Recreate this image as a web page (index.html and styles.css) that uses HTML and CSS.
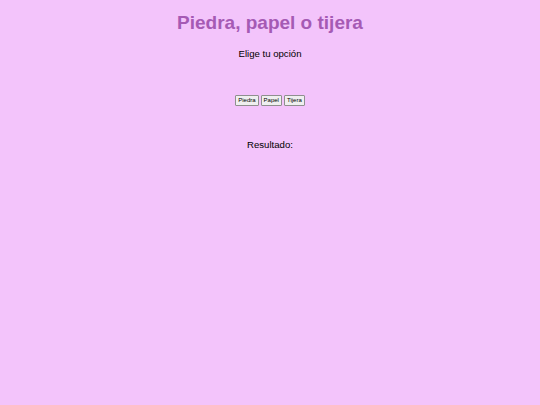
FILE: index.html
```html
<!DOCTYPE html>
<html lang="es">
<head>
	<meta charset="UTF-8">
	<meta name="viewport" content="width=device-width, initial-scale=1.0">
	<title>Piedra, papel o tijera</title>
	<link rel="stylesheet" href="styles.css">
</head>
<body>
	<h1 class="title">Piedra, papel o tijera</h1>
	<p class="prompt">Elige tu opción</p>

	<div class="choices">
		<button class="choice">Piedra</button>
		<button class="choice">Papel</button>
		<button class="choice">Tijera</button>
	</div>

	<p class="result">Resultado: <span class="result-text"></span></p>
</body>
</html>
```

FILE: styles.css
```css
*{padding:0;margin:0;box-sizing:border-box;}
body {background-color:#f3c4fb;font-family:"Liberation Sans", Arial, sans-serif;color:#000;text-align:center;min-height:100vh;}
.title {font-size:19px;line-height:22px;padding-top:12px;color:#a55ab4;font-weight:bold;}
.prompt {font-size:9.6px;line-height:11px;margin-top:14px;}
.choices {display:flex;justify-content:center;gap:2px;margin-top:36px;}
.choice {font-family:"Liberation Sans", Arial, sans-serif;font-size:6px;line-height:7px;padding:1px 2px;border:1px solid #8f8f8f;border-radius:1px;background-color:#efefef;color:#000;}
.result {font-size:9.6px;line-height:11px;margin-top:33px;}
```
